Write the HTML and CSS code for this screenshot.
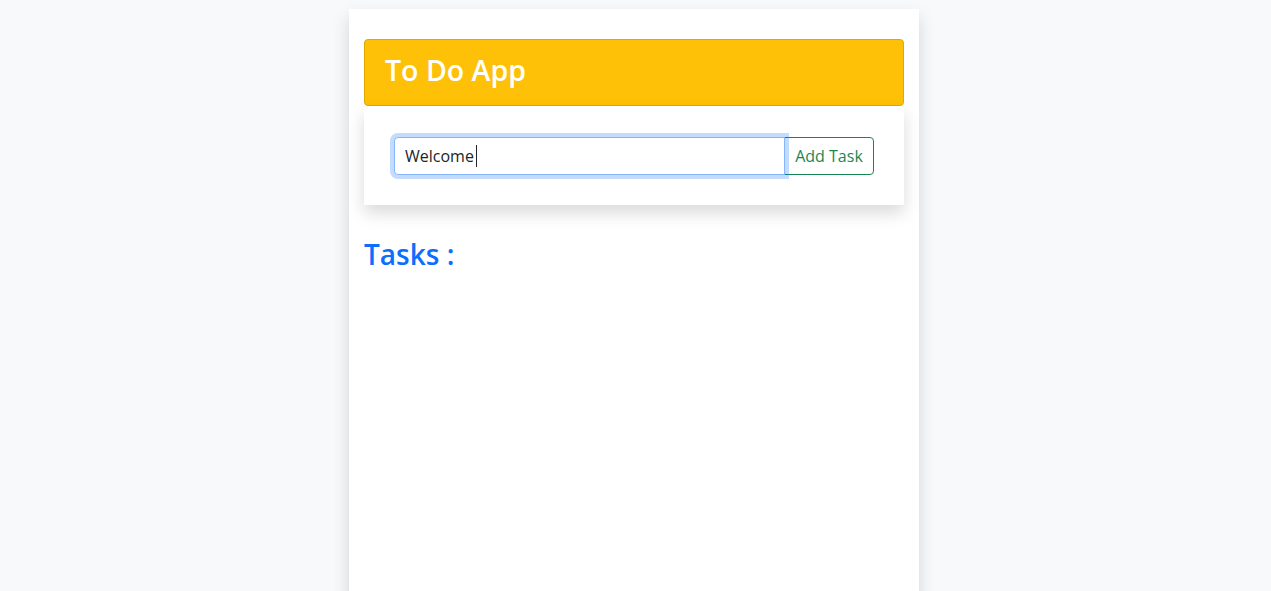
FILE: index.html
```html
<!DOCTYPE html>
<html lang="en">
<head>
<meta charset="utf-8">
<title>To Do App</title>
<link rel="stylesheet" href="styles.css">
</head>
<body>
<main class="app">
  <header class="app-header">
    <h2 class="app-title">To Do App</h2>
  </header>
  <section class="entry-card">
    <form class="input-group" onsubmit="return false;">
      <div class="input-wrap">
        <input class="task-input is-focused" type="text" value="Welcome">
        <span class="caret"></span>
      </div>
      <button class="btn-add" type="submit">Add Task</button>
    </form>
  </section>
  <h2 class="tasks-title">Tasks :</h2>
  <ul class="task-list"></ul>
</main>
</body>
</html>
```

FILE: styles.css
```css
* { box-sizing: border-box; }

html, body {
  margin: 0;
  padding: 0;
}

body {
  background: #f8f9fa;
  font-family: "Open Sans", "Noto Sans", "Liberation Sans", sans-serif;
  color: #212529;
  font-size: 16px;
  overflow: hidden;
}

.app {
  width: 570px;
  margin: 9px 0 0 calc(50% - 286.5px);
  min-height: 620px;
  background: #fff;
  padding: 30px 15px;
  box-shadow: 0 0.5rem 1rem rgba(0, 0, 0, 0.15);
}

.app-header {
  background: #ffc107;
  border: 1px solid #e0a800;
  border-radius: 4px;
  padding: 12px 20px 16px;
}

.app-title {
  margin: 0;
  color: #fff;
  font-size: 28.5px;
  font-weight: 600;
  line-height: 37px;
}

.entry-card {
  background: #fff;
  padding: 31px 30px 30px;
  box-shadow: 0 0.5rem 1rem rgba(0, 0, 0, 0.15);
}

.input-group {
  display: flex;
  margin: 0;
}

.input-wrap {
  flex: 1;
  display: flex;
  position: relative;
  z-index: 2;
}

.task-input {
  flex: 1;
  height: 38px;
  border: 1px solid #ced4da;
  border-radius: 4px 0 0 4px;
  padding: 6px 10px;
  font: inherit;
  font-size: 16px;
  color: #212529;
  outline: none;
}

.task-input.is-focused,
.task-input:focus {
  border-color: #86b7fe;
  box-shadow: 0 0 0 4px rgba(13, 110, 253, 0.25);
}

.caret {
  position: absolute;
  left: 82px;
  top: 8px;
  width: 1px;
  height: 22px;
  background: #212529;
}

.btn-add {
  height: 38px;
  width: 90px;
  margin-left: -1px;
  background: #fff;
  color: #198754;
  border: 1px solid #198754;
  border-radius: 0 4px 4px 0;
  font: inherit;
  font-size: 16px;
  padding: 0 8px;
  cursor: pointer;
}

.tasks-title {
  margin: 30px 0 0;
  color: #0d6efd;
  font-size: 28px;
  font-weight: 600;
  line-height: 38px;
}

.task-list {
  list-style: none;
  margin: 0;
  padding: 0;
}
```
